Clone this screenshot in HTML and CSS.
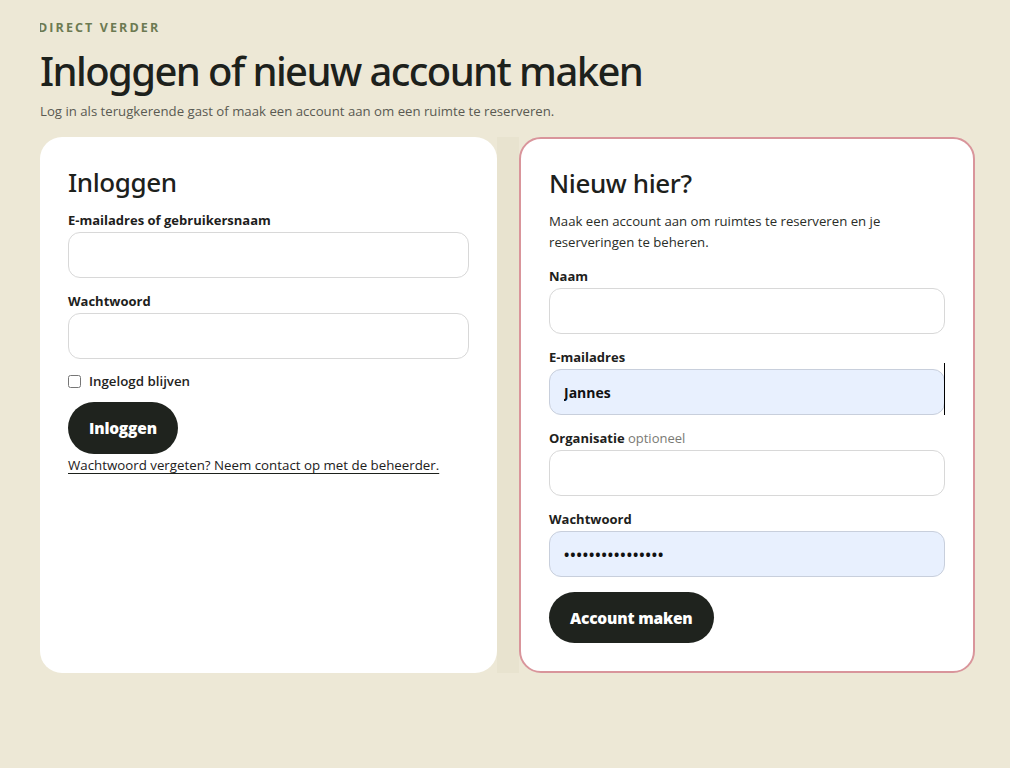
FILE: index.html
```html
<!DOCTYPE html>
<html lang="nl">
<head>
<meta charset="utf-8">
<title>Inloggen of nieuw account maken</title>
<link rel="stylesheet" href="styles.css">
</head>
<body>
<main class="page">
  <header class="intro">
    <div class="eyebrow-wrap"><p class="eyebrow">DIRECT VERDER</p></div>
    <h1 class="title">Inloggen of nieuw account maken</h1>
    <p class="subtitle">Log in als terugkerende gast of maak een account aan om een ruimte te reserveren.</p>
  </header>
  <div class="cards">
    <section class="card">
      <h2 class="card-title">Inloggen</h2>
      <form class="form">
        <label class="field">
          <span class="label">E-mailadres of gebruikersnaam</span>
          <input class="input" type="text">
        </label>
        <label class="field">
          <span class="label">Wachtwoord</span>
          <input class="input" type="password">
        </label>
        <label class="check">
          <input class="checkbox" type="checkbox">
          <span>Ingelogd blijven</span>
        </label>
        <button class="btn" type="button">Inloggen</button>
        <a class="link" href="#">Wachtwoord vergeten? Neem contact op met de beheerder.</a>
      </form>
    </section>
    <section class="card card-accent">
      <h2 class="card-title">Nieuw hier?</h2>
      <p class="lead">Maak een account aan om ruimtes te reserveren en je reserveringen te beheren.</p>
      <form class="form">
        <label class="field">
          <span class="label">Naam</span>
          <input class="input" type="text">
        </label>
        <label class="field">
          <span class="label">E-mailadres</span>
          <span class="input-wrap"><input class="input input-filled" type="text" value="Jannes"><span class="caret"></span></span>
        </label>
        <label class="field">
          <span class="label">Organisatie <span class="optional">optioneel</span></span>
          <input class="input" type="text">
        </label>
        <label class="field">
          <span class="label">Wachtwoord</span>
          <input class="input input-filled input-pass" type="password" value="abcdefghijklmnop">
        </label>
        <button class="btn btn-create" type="button">Account maken</button>
      </form>
    </section>
  </div>
</main>
</body>
</html>
```

FILE: styles.css
```css
* { box-sizing: border-box; }
html, body { margin: 0; padding: 0; }
body {
  background: #ede8d6;
  color: #1f231e;
  font-family: "Open Sans", "Noto Sans", sans-serif;
  width: 1010px;
  height: 768px;
  overflow: hidden;
}
.page {
  padding: 19px 35px 0 40px;
}
.intro { margin-bottom: 17px; }
.eyebrow-wrap {
  overflow: hidden;
  height: 18px;
}
.eyebrow {
  margin: 0 0 0 -2px;
  font-family: "Open Sans", sans-serif;
  font-weight: 700;
  font-size: 12.5px;
  line-height: 18px;
  letter-spacing: 2.1px;
  color: #6c7a52;
}
.title {
  margin: 9px 0 0 0;
  font-family: "Noto Sans", "Open Sans", sans-serif;
  font-weight: 500;
  font-size: 40px;
  line-height: 50px;
  letter-spacing: -1.6px;
  color: #1d211c;
}
.subtitle {
  margin: 6px 0 0 0;
  font-size: 13.2px;
  line-height: 18px;
  color: #5a5a52;
}
.cards {
  display: grid;
  grid-template-columns: 457px 456px;
  gap: 22px;
  width: 935px;
  background: linear-gradient(to right, transparent 457px, #e8e3cf 457px, #e8e3cf 479px, transparent 479px);
}
.card {
  background: #fff;
  border-radius: 22px;
  padding: 27px 28px 28px;
}
.card-accent {
  border: 2px solid #d9959b;
  padding: 26px 28px 28px;
}
.card-title {
  margin: 0;
  font-family: "Noto Sans", "Open Sans", sans-serif;
  font-weight: 500;
  font-size: 26px;
  line-height: 36px;
  letter-spacing: -0.4px;
  color: #1d211c;
}
.lead {
  margin: 10px 0 0;
  font-size: 13.2px;
  line-height: 21px;
  color: #2a2d28;
}
.form {
  display: flex;
  flex-direction: column;
  align-items: flex-start;
  margin-top: 11px;
}
.card-accent .form { margin-top: 14px; }
.field {
  display: flex;
  flex-direction: column;
  gap: 3px;
  width: 100%;
  margin-bottom: 14px;
}
.label {
  font-weight: 700;
  font-size: 13px;
  line-height: 18px;
  color: #1d211c;
}
.optional {
  font-weight: 400;
  color: #7a7a74;
}
.input-wrap { position: relative; display: block; }
.input {
  display: block;
  width: 100%;
  height: 46px;
  border: 1px solid #d8d8d8;
  border-radius: 12px;
  background: #fff;
  padding: 0 14px;
  font-family: "Open Sans", sans-serif;
  font-size: 14px;
  font-weight: 700;
  color: #111;
  outline: none;
}
.input-filled {
  background: #e8f0fe;
  border-color: #c8cfdc;
}
.input-pass {
  font-size: 14px;
  letter-spacing: 1px;
}
.caret {
  position: absolute;
  right: 0;
  top: -6px;
  width: 1px;
  height: 52px;
  background: #000;
}
.check {
  display: flex;
  align-items: center;
  gap: 8px;
  font-size: 13.3px;
  font-weight: 600;
  line-height: 18px;
  margin: -1px 0 12px;
}
.checkbox {
  margin: 0;
  width: 13px;
  height: 13px;
}
.btn {
  height: 52px;
  padding: 0 21px;
  border: 0;
  border-radius: 26px;
  background: #1f231e;
  color: #fff;
  font-family: "Open Sans", sans-serif;
  font-weight: 800;
  font-size: 15.5px;
  letter-spacing: -0.2px;
  cursor: pointer;
}
.btn-create { margin-top: 1px; height: 51px; }
.link {
  margin-top: 2px;
  font-size: 13.3px;
  line-height: 18px;
  color: #1d211c;
  text-decoration: underline;
  text-underline-offset: 3px;
}
```
